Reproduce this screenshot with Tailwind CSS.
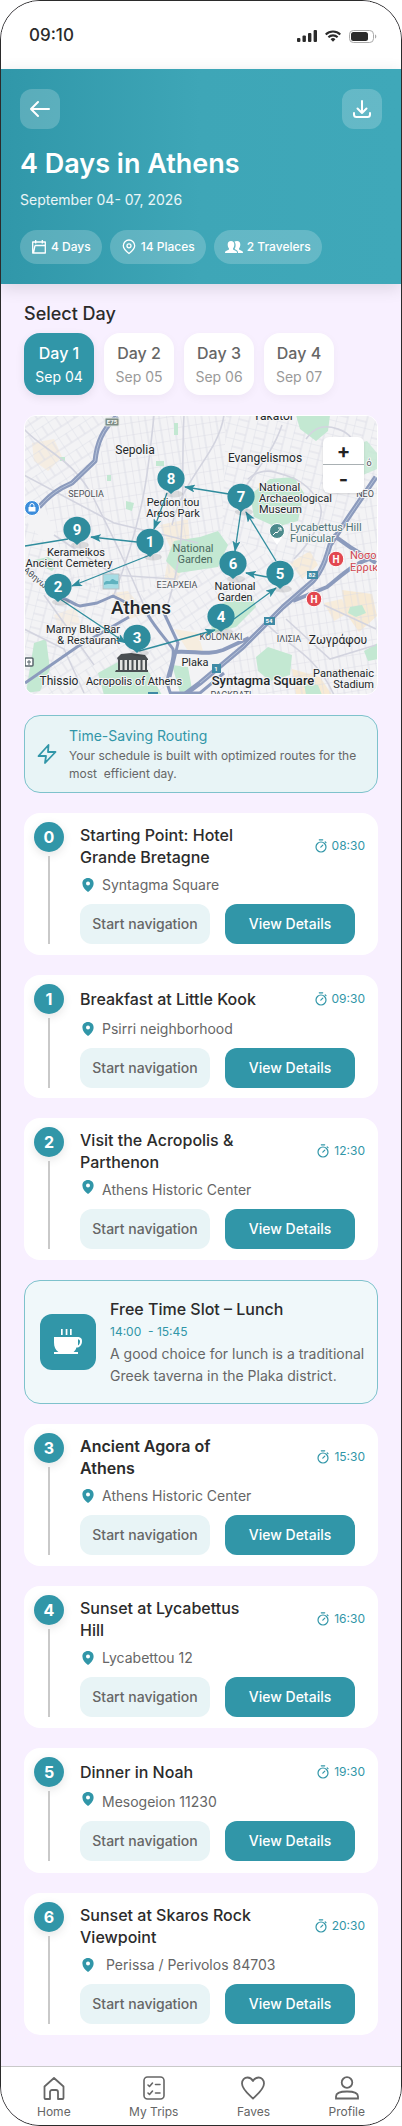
<!DOCTYPE html>
<html lang="en">
  <head>
    <meta charset="UTF-8" />
    <meta name="viewport" content="width=device-width, initial-scale=1.0" />
    <title>4 Days in Athens</title>
    <script src="https://cdn.jsdelivr.net/npm/@tailwindcss/browser@4"></script>
  </head>
  <body class="bg-white font-['Inter',sans-serif] text-[#2b2b2b]">
    <!-- Shared icons -->
    <svg class="hidden">
      <symbol id="pin" viewBox="0 0 12 14">
        <path fill="currentColor" fill-rule="evenodd" d="M6 0C2.700 0 .4 2.400.4 5.400.4 8.600 3 11.800 6 14c3-2.200 5.600-5.400 5.600-8.600C11.600 2.400 9.300 0 6 0Zm0 3.400a2 2 0 1 1 0 4 2 2 0 0 1 0-4Z" />
      </symbol>
      <symbol id="timer" viewBox="0 0 12 14">
        <g fill="none" stroke="currentColor" stroke-width="1.200" stroke-linecap="round">
          <circle cx="6" cy="8" r="5" />
          <path d="M4.300.8h3.400M5.800 8.200l2-2M10.200 2.900l.8.8" />
        </g>
      </symbol>
    </svg>

    <div class="w-full overflow-hidden rounded-[40px] border border-[#2b2b2b] bg-[#f8f0ff]">
      <!-- Status bar -->
      <div class="flex h-[68px] items-center justify-between bg-white pt-[2px] pr-6 pl-7">
        <span class="text-[17px] font-medium">09:10</span>
        <div class="flex items-center gap-2">
          <svg class="h-3 w-5" viewBox="0 0 20 12" fill="#2b2b2b">
            <rect x="0" y="8" width="3.400" height="4" rx="1" />
            <rect x="5.500" y="5.500" width="3.400" height="6.500" rx="1" />
            <rect x="11" y="3" width="3.400" height="9" rx="1" />
            <rect x="16.600" y="0" width="3.400" height="12" rx="1" />
          </svg>
          <svg class="h-3 w-4" viewBox="0 0 17 12" fill="none" stroke="#2b2b2b" stroke-width="2.200">
            <path d="M.8 4.400a11 11 0 0 1 15.400 0M3.600 7.300a7 7 0 0 1 9.800 0" />
            <path d="M8.500 12 5.900 9.400a3.700 3.700 0 0 1 5.200 0Z" fill="#2b2b2b" stroke="none" />
          </svg>
          <svg class="h-[13px] w-7" viewBox="0 0 28 13">
            <rect x=".5" y=".5" width="24" height="12" rx="3.800" fill="none" stroke="#a9a9a9" />
            <rect x="2" y="2" width="17" height="9" rx="2.500" fill="#2b2b2b" />
            <path d="M26 4.500v4c.8-.3 1.300-1.100 1.300-2s-.5-1.700-1.300-2Z" fill="#a9a9a9" />
          </svg>
        </div>
      </div>

      <!-- Header -->
      <header class="bg-linear-to-r from-[#3097a9] via-[#3ea6b7] via-50% to-[#3fa8b9] px-[19px] py-5 text-white shadow-[0_4px_16px_rgba(0,0,0,0.12)]">
        <div class="flex justify-between">
          <button aria-label="Back" class="flex size-10 items-center justify-center rounded-xl bg-white/20">
            <svg class="size-5" viewBox="0 0 20 20" fill="none" stroke="currentColor" stroke-width="2" stroke-linecap="round" stroke-linejoin="round">
              <path d="M19 10H1M8 3l-7 7 7 7" />
            </svg>
          </button>
          <button aria-label="Download" class="flex size-10 items-center justify-center rounded-xl bg-white/20">
            <svg class="size-5" viewBox="0 0 20 20" fill="none" stroke="currentColor" stroke-width="2" stroke-linecap="round" stroke-linejoin="round">
              <path d="M10 2v12M5.500 9.500 10 14l4.500-4.500M2 14v1.500A2.500 2.500 0 0 0 4.500 18h11a2.500 2.500 0 0 0 2.500-2.500V14" />
            </svg>
          </button>
        </div>
        <h1 class="mt-[17px] text-[27px] leading-9 font-semibold">4 Days in Athens</h1>
        <p class="mt-2 text-sm text-white/90">September 04- 07, 2026</p>
        <ul class="mt-5 flex gap-2 text-xs leading-[34px] font-medium">
          <li class="flex items-center gap-1 rounded-full bg-white/20 px-[11px]">
            <svg class="size-4" viewBox="0 0 16 16" fill="none" stroke="currentColor" stroke-width="1.300" stroke-linejoin="round">
              <path d="M1.700 3h12.600v11H1.700ZM4.700 1v3.500M11.300 1v3.500M4 6.500h10.300M4 6.500 2.500 14" />
            </svg>
            4 Days
          </li>
          <li class="flex items-center gap-1 rounded-full bg-white/20 px-[11px]">
            <svg class="size-4" viewBox="0 0 16 16" fill="none" stroke="currentColor" stroke-width="1.300">
              <path d="M8 14.500C4.800 12 2.300 9.600 2.300 6.700a5.700 5.700 0 0 1 11.400 0c0 2.900-2.500 5.300-5.700 7.800Z" />
              <circle cx="8" cy="6.800" r="2" />
            </svg>
            14 Places
          </li>
          <li class="flex items-center gap-1 rounded-full bg-white/20 px-[11px]">
            <svg class="h-4 w-[18px]" viewBox="0 0 18 16" fill="currentColor">
              <path d="M6 2c2.200 0 3.300 1.500 3.300 3.500 0 1.700-.5 3-1.300 3.900v1.200l3 1.400c.7.400 1 1 1 2H0c0-1 .3-1.600 1-2l3-1.400V9.400C3.200 8.500 2.700 7.200 2.700 5.500 2.700 3.500 3.800 2 6 2Z" />
              <path d="M12 2c2.200 0 3.300 1.500 3.300 3.500 0 1.700-.5 3-1.300 3.900v1.200l3 1.400c.7.400 1 1 1 2h-5c0-1.600-.6-2.400-1.600-3L9.600 10c1.600-2.500 1.300-6-.3-7.200.7-.5 1.600-.8 2.700-.8Z" />
            </svg>
            2 Travelers
          </li>
        </ul>
      </header>

      <main class="flex flex-col gap-5 px-[23px] pt-[18px] pb-[31px]">
        <!-- Day picker -->
        <section>
          <h2 class="text-lg leading-6 font-medium">Select Day</h2>
          <div class="mt-[7px] flex gap-[10px] text-center">
            <button class="h-[62px] w-[70px] rounded-2xl bg-[#3196a8] pt-[2px] text-white shadow-[0_3px_10px_rgba(0,0,0,0.08)]">
              <span class="block text-base leading-6 font-medium">Day 1</span>
              <span class="block text-sm leading-6">Sep 04</span>
            </button>
            <button class="h-[62px] w-[70px] rounded-2xl bg-white pt-[2px] shadow-[0_3px_10px_rgba(0,0,0,0.04)]">
              <span class="block text-base leading-6 font-medium text-[#666]">Day 2</span>
              <span class="block text-sm leading-6 text-[#999]">Sep 05</span>
            </button>
            <button class="h-[62px] w-[70px] rounded-2xl bg-white pt-[2px] shadow-[0_3px_10px_rgba(0,0,0,0.04)]">
              <span class="block text-base leading-6 font-medium text-[#666]">Day 3</span>
              <span class="block text-sm leading-6 text-[#999]">Sep 06</span>
            </button>
            <button class="h-[62px] w-[70px] rounded-2xl bg-white pt-[2px] shadow-[0_3px_10px_rgba(0,0,0,0.04)]">
              <span class="block text-base leading-6 font-medium text-[#666]">Day 4</span>
              <span class="block text-sm leading-6 text-[#999]">Sep 07</span>
            </button>
          </div>
        </section>

        <!-- Map -->
        <section class="relative overflow-hidden rounded-xl border border-white">
          <svg class="block w-full font-['Roboto',sans-serif]" viewBox="1 1 352 278">
            <defs>
              <pattern id="streetsA" width="19" height="14" patternUnits="userSpaceOnUse" patternTransform="rotate(14)">
                <path d="M0 0h19M0 8h11M0 0v14M11 0v14" fill="none" stroke="#dddee7" stroke-width=".9" />
              </pattern>
              <pattern id="streetsB" width="16" height="19" patternUnits="userSpaceOnUse" patternTransform="rotate(-33)">
                <path d="M0 0h16M0 11h16M0 0v19M9 0v11" fill="none" stroke="#dddee7" stroke-width=".9" />
              </pattern>
              <pattern id="streetsC" width="14" height="12" patternUnits="userSpaceOnUse" patternTransform="rotate(-9)">
                <path d="M0 0h14M0 0v12M7 0v12" fill="none" stroke="#dbdce5" stroke-width=".9" />
              </pattern>
              <marker id="arrow" viewBox="0 0 11 8" refX="10" refY="4" markerWidth="11" markerHeight="8" markerUnits="userSpaceOnUse" orient="auto">
                <path d="M0 0 11 4 0 8 2.500 4Z" fill="#2f8c9d" />
              </marker>
              <g id="marker">
                <ellipse cx="3" cy="15" rx="9" ry="3.500" fill="#000" opacity=".1" />
                <ellipse cx="0" cy="-.5" rx="13.600" ry="12.800" fill="#2f8c9d" />
                <path d="M-5 10.500 0 15l5-4.500Z" fill="#2f8c9d" />
              </g>
            </defs>

            <rect width="354" height="280" fill="#f3f3f5" />
            <!-- Built-up patches -->
            <g fill="#f7ead5">
              <path d="M8 28 30 24l8 18-14 14L10 46Z" opacity=".6" />
              <path d="m136 110 28-6 2 26-14 40-12-4 6-34Z" opacity=".7" />
              <path d="m266 148 20-12 8 14-16 14Z" opacity=".8" />
              <path d="m318 175 30 4 5 22-18 16-14-20Z" />
              <path d="m268 254 28 8 12 18h-36Z" />
              <path d="m88 178 16-2 18 22-16 6Z" opacity=".7" />
              <path d="m30 200 22-8 4 16-20 8Z" opacity=".5" />
              <path d="m300 188 18-4 6 14-14 8Z" opacity=".8" />
              <path d="m150 214 24 4 6 22-16-4Z" opacity=".7" />
            </g>
            <!-- Street grid -->
            <path d="M0 0h92L70 50 0 104Z" fill="url(#streetsB)" />
            <path d="M92 0h110l-4 120-90 66-60-20L20 90l52-40Z" fill="url(#streetsC)" />
            <path d="M202 0h152v70l-60 90-96-40Z" fill="url(#streetsA)" />
            <path d="M0 104 50 160l60 30-10 20L0 270Z" fill="url(#streetsA)" />
            <path d="m198 120 94 40-60 60-120-10-4-24Z" fill="url(#streetsB)" />
            <path d="m354 70-60 90-90 80v40h150Z" fill="url(#streetsC)" />
            <path d="m0 270 100-66 50 30-10 46H0Z" fill="url(#streetsB)" />
            <!-- Parks -->
            <g fill="#c3e8d2">
              <path d="M272 0h34l-2 16-12 10-16-12Z" />
              <path d="m329 30 14-4 10 12v16l-14 6Z" opacity=".8" />
              <path d="m226 80 20-16 24-2 10 16-6 28-22 6-22-10Z" />
              <path d="m142 146 8-20 26-4 18-6 10 14-10 22-40 6Z" />
              <path d="m186 196 20-12 22-4 4 12-20 20-24 6Z" />
              <path d="m74 258 22-12 26 6 16 28H80Z" />
              <path d="m10 228 12-4 4 30-10 22-14 2Z" />
              <path d="m232 242 12-10 24 8-2 20-20 6-12-10Z" />
              <path d="m326 192 12-2 4 8-10 4-8-4Z" />
              <path d="m6 146 18-4 12 6-8 8Z" />
              <path d="m148 250 16 2 4 22-12 4Z" />
              <path d="M132 46h8v5h-8ZM150 8h4v12h-4ZM36 42h5v4h-5ZM83 60h4v6h-4ZM102 86l8 2-2 8-6-2Z" />
              <path d="m340 236 14-8v16l-10 2Z" />
              <path d="m280 268 14 2 4 10h-16Z" />
            </g>
            <!-- Secondary roads -->
            <g fill="none" stroke="#d3d4df" stroke-width="1.600">
              <path d="M0 14c20 22 50 30 70 70s30 60 54 116" />
              <path d="M130 0c-6 60-10 100-40 180M160 0c-4 80 6 130-20 200" />
              <path d="M200 0c-6 40-40 60-52 110M258 10c-10 30-30 50-42 70" />
              <path d="M0 60 90 108l84 20M30 120l60 40 60 4" />
              <path d="M224 64c16-14 30-6 42-2s24 14 30 28-12 40-26 54" />
              <path d="M282 24c10-14 20-14 32-10s18 12 14 24" />
              <path d="m300 190 52 24M262 204l44 40 46-14M240 206c20 24 50 30 70 74" />
              <path d="M20 180 70 250M0 214l40 20 20 44" />
            </g>
            <!-- Motorways -->
            <g fill="none" stroke="#8c9bbd" stroke-width="5" stroke-linejoin="round">
              <path d="M93 1C78 15 73 28 71 46L48 68c-14 6-22 12-33 24" />
              <path d="M352 62 326 100l-20 30c-4 14-8 26-17 36l-30 26-40 40-43 36-16 12" />
              <path d="M352 142c-20 4-34 18-49 30l-34 14M309 120l17 12 26 16" stroke-width="4" />
              <path d="M124 200c8 14 18 24 25 34 2 12-6 24-6 34l4 12M140 198l14 30-8 34" stroke-width="3" />
              <path d="M149 237c20-2 34 4 50-2l26-12" stroke-width="4" />
              <path d="M36 182c12 4 14 8 20 9l17-3 16-7 12 6" stroke-width="3" />
              <path d="M1 268 53 232l52-30" stroke-width="3" />
              <path d="m146 278 30 0 24-20" stroke-width="3" />
            </g>
            <g fill="none" stroke="#b3c0d8" stroke-width="1">
              <path d="M93 1C78 15 73 28 71 46L48 68c-14 6-22 12-33 24" />
              <path d="M352 62 326 100l-20 30c-4 14-8 26-17 36l-30 26-40 40-43 36" />
            </g>

            <!-- Road signs and small symbols -->
            <g font-size="6" font-weight="700" text-anchor="middle" fill="#fff">
              <rect x="81" y="3" width="14" height="8" rx="1" fill="#7c8c85" stroke="#dfe5e2" />
              <text x="88" y="9">E75</text>
              <rect x="283" y="156" width="11" height="8" fill="#3f8aa5" />
              <text x="288" y="162">82</text>
              <rect x="240" y="202" width="11" height="8" fill="#3f8aa5" />
              <text x="245" y="208">54</text>
              <rect x="188" y="249" width="9" height="9" fill="#3f8aa5" />
              <text x="192" y="256">1</text>
            </g>
            <rect x="124" y="277" width="10" height="4" fill="#3f8aa5" />
            <circle cx="8" cy="93" r="7.500" fill="#3c8ddb" stroke="#fff" />
            <path d="M4.500 92h7v4.500h-7Z" fill="#fff" />
            <path d="M6 92v-1.500a2 2 0 0 1 4 0V92" fill="none" stroke="#fff" />
            <rect x="1" y="243" width="8" height="8" rx="1" fill="#fff" stroke="#59656c" stroke-width="1.500" />
            <path d="M3 247h4M5 245v5" stroke="#59656c" />
            <rect x="79" y="159" width="16" height="15" fill="#a6dce4" stroke="#b8bfc3" />
            <path d="M80 168c3-4 5 0 7-3s4 2 7 1v3c-5 1-9-1-14 1Z" fill="#5fb2bf" />
            <path d="m247 121 6 9 6-9Z" fill="#fff" />
            <circle cx="253" cy="116" r="7.500" fill="#4c8a8c" stroke="#fff" />
            <path d="m249 120 3-3 1 1 4-5m-3 0h3v3" fill="none" stroke="#fff" />
            <g fill="#e2474f" stroke="#fff">
              <circle cx="312" cy="144" r="7.800" />
              <circle cx="290" cy="184" r="7.800" />
            </g>
            <g fill="#fff" font-size="10" font-weight="700" text-anchor="middle">
              <text x="312" y="148">H</text>
              <text x="290" y="188">H</text>
            </g>
            <!-- Parthenon -->
            <path d="M94 245h28v10H94Z" fill="#e4e4e2" />
            <g fill="#4a4f52">
              <path d="m93 243 4-4 10-1 14 2 3 4v1H94Z" />
              <path d="M94 245h2v10h-2ZM98.500 245h2v10h-2ZM103 245h2v10h-2ZM107.500 245h2v10h-2ZM112 245h2v10h-2ZM116.500 245h2v10h-2ZM121 245h2v10h-2Z" />
              <path d="M92 255h32v2H91Z" />
            </g>

            <!-- Place names -->
            <g font-size="11" fill="#23272a" stroke="#f5f5f6" stroke-width="2" stroke-linejoin="round" paint-order="stroke" text-anchor="middle">
              <text x="111" y="39" font-size="12">Sepolia</text>
              <text x="249" y="5" font-size="12">Yakatol</text>
              <text x="241" y="47" font-size="12">Evangelismos</text>
              <text x="149" y="91">Pedion tou</text>
              <text x="149" y="102">Areos Park</text>
              <text x="52" y="141">Kerameikos</text>
              <text x="45" y="152">Ancient Cemetery</text>
              <text x="117" y="199" font-size="19" font-weight="500">Athens</text>
              <text x="35" y="270" font-size="12">Thissio</text>
              <text x="110" y="270">Acropolis of Athens</text>
              <text x="171" y="251">Plaka</text>
              <text x="211" y="175">National</text>
              <text x="211" y="186">Garden</text>
              <text x="314" y="229" font-size="12">Ζωγράφου</text>
              <text x="239" y="270" font-size="13" font-weight="500">Syntagma Square</text>
              <g text-anchor="end">
                <text x="96" y="218">Marny Blue Bar</text>
                <text x="96" y="229">&amp; Restaurant</text>
                <text x="350" y="262">Panathenaic</text>
                <text x="350" y="273">Stadium</text>
              </g>
              <g text-anchor="start">
                <text x="235" y="76">National</text>
                <text x="235" y="87">Archaeological</text>
                <text x="235" y="98">Museum</text>
              </g>
              <g fill="#4f7376" text-anchor="start">
                <text x="266" y="116">Lycabettus Hill</text>
                <text x="266" y="127">Funicular</text>
              </g>
              <g fill="#4c6a60" stroke="none">
                <text x="169" y="137">National</text>
                <text x="171" y="148">Garden</text>
              </g>
              <g fill="#cf4650" text-anchor="start">
                <text x="326" y="144">Νοσο</text>
                <text x="326" y="156">Ερρικ</text>
              </g>
              <g font-size="9" fill="#4a5056">
                <text x="62" y="82">SEPOLIA</text>
                <text x="153" y="173">ΕΞΑΡΧΕΙΑ</text>
                <text x="197" y="225">KOLONAKI</text>
                <text x="265" y="227">ΙΛΙΣΙΑ</text>
                <text x="341" y="82">ΝΕΟ</text>
                <text x="345" y="51">ό</text>
                <text x="207" y="283">PACKRATI</text>
                <text x="13" y="167" transform="rotate(40 13 164)">Αθηνών</text>
              </g>
            </g>

            <!-- Route -->
            <path d="M44 124 1 131" fill="none" stroke="#2f8c9d" stroke-width="1.300" />
            <g fill="none" stroke="#2f8c9d" stroke-width="1.300">
              <path d="M205 79 161 72" marker-end="url(#arrow)" />
              <path d="M143 78 130 114" marker-end="url(#arrow)" />
              <path d="M113 127 67 122" marker-end="url(#arrow)" />
              <path d="M126 140 48 171" marker-end="url(#arrow)" />
              <path d="M36 184 102 228" marker-end="url(#arrow)" />
              <path d="M115 236 191 215" marker-end="url(#arrow)" />
              <path d="M210 204 252 173" marker-end="url(#arrow)" />
              <path d="M243 162 222 158" marker-end="url(#arrow)" />
              <path d="M252 146 222 97" marker-end="url(#arrow)" />
              <path d="M217 95 211 136" marker-end="url(#arrow)" />
            </g>
            <use href="#marker" x="147" y="64" />
            <use href="#marker" x="53" y="115" />
            <use href="#marker" x="126" y="127" />
            <use href="#marker" x="34" y="172" />
            <use href="#marker" x="113" y="223" />
            <use href="#marker" x="217" y="82" />
            <use href="#marker" x="209" y="149" />
            <use href="#marker" x="256" y="159" />
            <use href="#marker" x="197" y="202" />
            <g font-size="15" font-weight="700" fill="#fff" text-anchor="middle">
              <text x="147" y="69">8</text>
              <text x="53" y="120">9</text>
              <text x="126" y="132">1</text>
              <text x="34" y="177">2</text>
              <text x="113" y="228">3</text>
              <text x="217" y="87">7</text>
              <text x="209" y="154">6</text>
              <text x="256" y="164">5</text>
              <text x="197" y="207">4</text>
            </g>
          </svg>
          <div class="absolute top-[21px] right-[13px] flex w-[41px] flex-col rounded-md bg-white text-center text-xl font-bold text-[#222] shadow">
            <button aria-label="Zoom in" class="h-7 border-b border-[#a9b0b3] leading-7">+</button>
            <button aria-label="Zoom out" class="h-7 leading-6">-</button>
          </div>
        </section>

        <!-- Routing note -->
        <section class="flex items-center gap-3 rounded-2xl border border-[#7ec2cc] bg-[#e8f4f6] py-[9px] pr-4 pl-3">
          <svg class="size-5 shrink-0 text-[#3196a8]" viewBox="0 0 20 20" fill="none" stroke="currentColor" stroke-width="1.800" stroke-linejoin="round">
            <path d="M11.500 1 1.500 12H9l-1 7L18.500 8H11Z" />
          </svg>
          <div>
            <h3 class="text-sm leading-[22px] text-[#3196a8]">Time-Saving Routing</h3>
            <p class="text-xs leading-[18px] text-[#666]">Your schedule is built with optimized routes for the<br />most &nbsp;efficient day.</p>
          </div>
        </section>

        <!-- Stops -->
        <article class="flex gap-4 rounded-2xl bg-white pt-[9px] pr-[13px] pb-[11px] pl-[10px]">
          <div class="flex flex-col items-center gap-1">
            <span class="flex size-[30px] items-center justify-center rounded-full bg-[#3196a8] text-base font-bold text-white shadow-[0_3px_10px_rgba(0,0,0,0.1)]">0</span>
            <span class="w-[2px] grow bg-[#c9c9c9]"></span>
          </div>
          <div class="grow pt-[2px]">
            <div class="flex min-h-[25px] items-center justify-between">
              <h3 class="text-base leading-[22px] font-medium">Starting Point: Hotel<br />Grande Bretagne</h3>
              <span class="flex items-center gap-[5px] text-xs text-[#3196a8]"><svg class="h-[14px] w-3"><use href="#timer" /></svg>08:30</span>
            </div>
            <p class="mt-[7px] flex items-center gap-2 pl-[2px] text-sm text-[#666]"><svg class="h-[14px] w-3 text-[#3196a8]"><use href="#pin" /></svg>Syntagma Square</p>
            <div class="mt-[9px] mr-[10px] grid grid-cols-2 gap-[15px] text-sm font-medium">
              <button class="h-10 rounded-xl bg-[#e8f4f6] text-[#666]">Start navigation</button>
              <button class="h-10 rounded-xl bg-[#3196a8] text-white">View Details</button>
            </div>
          </div>
        </article>

        <article class="flex gap-4 rounded-2xl bg-white pt-[9px] pr-[13px] pb-[10px] pl-[10px]">
          <div class="flex flex-col items-center gap-1">
            <span class="flex size-[30px] items-center justify-center rounded-full bg-[#3196a8] text-base font-bold text-white shadow-[0_3px_10px_rgba(0,0,0,0.1)]">1</span>
            <span class="w-[2px] grow bg-[#c9c9c9]"></span>
          </div>
          <div class="grow pt-[2px]">
            <div class="flex min-h-[26px] items-center justify-between">
              <h3 class="text-base leading-[22px] font-medium">Breakfast at Little Kook</h3>
              <span class="flex items-center gap-[5px] text-xs text-[#3196a8]"><svg class="h-[14px] w-3"><use href="#timer" /></svg>09:30</span>
            </div>
            <p class="mt-[7px] flex items-center gap-2 pl-[2px] text-sm text-[#666]"><svg class="h-[14px] w-3 text-[#3196a8]"><use href="#pin" /></svg>Psirri neighborhood</p>
            <div class="mt-[9px] mr-[10px] grid grid-cols-2 gap-[15px] text-sm font-medium">
              <button class="h-10 rounded-xl bg-[#e8f4f6] text-[#666]">Start navigation</button>
              <button class="h-10 rounded-xl bg-[#3196a8] text-white">View Details</button>
            </div>
          </div>
        </article>

        <article class="flex gap-4 rounded-2xl bg-white pt-[9px] pr-[13px] pb-[11px] pl-[10px]">
          <div class="flex flex-col items-center gap-1">
            <span class="flex size-[30px] items-center justify-center rounded-full bg-[#3196a8] text-base font-bold text-white shadow-[0_3px_10px_rgba(0,0,0,0.1)]">2</span>
            <span class="w-[2px] grow bg-[#c9c9c9]"></span>
          </div>
          <div class="grow pt-[2px]">
            <div class="flex min-h-[25px] items-center justify-between">
              <h3 class="text-base leading-[22px] font-medium">Visit the Acropolis &amp;<br />Parthenon</h3>
              <span class="flex items-center gap-[5px] text-xs text-[#3196a8]"><svg class="h-[14px] w-3"><use href="#timer" /></svg>12:30</span>
            </div>
            <p class="mt-[7px] flex items-start gap-2 pl-[2px] text-sm text-[#666]"><svg class="h-[14px] w-3 text-[#3196a8]"><use href="#pin" /></svg>Athens Historic Center</p>
            <div class="mt-[9px] mr-[10px] grid grid-cols-2 gap-[15px] text-sm font-medium">
              <button class="h-10 rounded-xl bg-[#e8f4f6] text-[#666]">Start navigation</button>
              <button class="h-10 rounded-xl bg-[#3196a8] text-white">View Details</button>
            </div>
          </div>
        </article>

        <!-- Free slot -->
        <article class="flex items-center gap-[14px] rounded-2xl border border-[#7ec2cc] bg-[#f0f8fa] py-4 pr-3 pl-[15px]">
          <div class="flex size-14 shrink-0 items-center justify-center rounded-xl bg-[#3196a8]">
            <svg class="size-7" viewBox="0 0 28 28" fill="#fff">
              <path d="M7 1h1.700v6H7ZM11.700 1h1.700v6h-1.700ZM16 1h1.700v6H16Z" />
              <path fill-rule="evenodd" d="M0 9h24.500a4 4 0 0 1 3.500 4c0 4-2.300 6.600-5.600 6.600-.5 2-1.400 3.400-2.800 4.400H24v2H0v-2h4.400C1.400 22 0 18.500 0 14.500Zm24 2.200v6.300c1.400-.8 2-2.300 2-4.200 0-1.100-.8-2.100-2-2.100Z" />
            </svg>
          </div>
          <div>
            <h3 class="text-base leading-6 font-medium">Free Time Slot – Lunch</h3>
            <p class="text-xs leading-[22px] text-[#3196a8]">14:00 &nbsp;- 15:45</p>
            <p class="text-sm leading-[22px] text-[#666]">A good choice for lunch is a traditional Greek taverna in the Plaka district.</p>
          </div>
        </article>

        <article class="flex gap-4 rounded-2xl bg-white pt-[9px] pr-[13px] pb-[11px] pl-[10px]">
          <div class="flex flex-col items-center gap-1">
            <span class="flex size-[30px] items-center justify-center rounded-full bg-[#3196a8] text-base font-bold text-white shadow-[0_3px_10px_rgba(0,0,0,0.1)]">3</span>
            <span class="w-[2px] grow bg-[#c9c9c9]"></span>
          </div>
          <div class="grow pt-[2px]">
            <div class="flex min-h-[25px] items-center justify-between">
              <h3 class="text-base leading-[22px] font-semibold">Ancient Agora of<br />Athens</h3>
              <span class="flex items-center gap-[5px] text-xs text-[#3196a8]"><svg class="h-[14px] w-3"><use href="#timer" /></svg>15:30</span>
            </div>
            <p class="mt-[7px] flex items-center gap-2 pl-[2px] text-sm text-[#666]"><svg class="h-[14px] w-3 text-[#3196a8]"><use href="#pin" /></svg>Athens Historic Center</p>
            <div class="mt-[9px] mr-[10px] grid grid-cols-2 gap-[15px] text-sm font-medium">
              <button class="h-10 rounded-xl bg-[#e8f4f6] text-[#666]">Start navigation</button>
              <button class="h-10 rounded-xl bg-[#3196a8] text-white">View Details</button>
            </div>
          </div>
        </article>

        <article class="flex gap-4 rounded-2xl bg-white pt-[9px] pr-[13px] pb-[11px] pl-[10px]">
          <div class="flex flex-col items-center gap-1">
            <span class="flex size-[30px] items-center justify-center rounded-full bg-[#3196a8] text-base font-bold text-white shadow-[0_3px_10px_rgba(0,0,0,0.1)]">4</span>
            <span class="w-[2px] grow bg-[#c9c9c9]"></span>
          </div>
          <div class="grow pt-[2px]">
            <div class="flex min-h-[25px] items-center justify-between">
              <h3 class="text-base leading-[22px] font-medium">Sunset at Lycabettus<br />Hill</h3>
              <span class="flex items-center gap-[5px] text-xs text-[#3196a8]"><svg class="h-[14px] w-3"><use href="#timer" /></svg>16:30</span>
            </div>
            <p class="mt-[7px] flex items-center gap-2 pl-[2px] text-sm text-[#666]"><svg class="h-[14px] w-3 text-[#3196a8]"><use href="#pin" /></svg>Lycabettou 12</p>
            <div class="mt-[9px] mr-[10px] grid grid-cols-2 gap-[15px] text-sm font-medium">
              <button class="h-10 rounded-xl bg-[#e8f4f6] text-[#666]">Start navigation</button>
              <button class="h-10 rounded-xl bg-[#3196a8] text-white">View Details</button>
            </div>
          </div>
        </article>

        <article class="flex gap-4 rounded-2xl bg-white pt-[9px] pr-[13px] pb-3 pl-[10px]">
          <div class="flex flex-col items-center gap-1">
            <span class="flex size-[30px] items-center justify-center rounded-full bg-[#3196a8] text-base font-bold text-white shadow-[0_3px_10px_rgba(0,0,0,0.1)]">5</span>
            <span class="w-[2px] grow bg-[#c9c9c9]"></span>
          </div>
          <div class="grow pt-[2px]">
            <div class="flex min-h-[26px] items-center justify-between">
              <h3 class="text-base leading-[22px] font-medium">Dinner in Noah</h3>
              <span class="flex items-center gap-[5px] text-xs text-[#3196a8]"><svg class="h-[14px] w-3"><use href="#timer" /></svg>19:30</span>
            </div>
            <p class="mt-[7px] flex items-start gap-2 pl-[2px] text-sm text-[#666]"><svg class="h-[14px] w-3 text-[#3196a8]"><use href="#pin" /></svg>Mesogeion 11230</p>
            <div class="mt-[9px] mr-[10px] grid grid-cols-2 gap-[15px] text-sm font-medium">
              <button class="h-10 rounded-xl bg-[#e8f4f6] text-[#666]">Start navigation</button>
              <button class="h-10 rounded-xl bg-[#3196a8] text-white">View Details</button>
            </div>
          </div>
        </article>

        <article class="flex gap-4 rounded-2xl bg-white pt-[9px] pr-[13px] pb-[11px] pl-[10px]">
          <div class="flex flex-col items-center gap-1">
            <span class="flex size-[30px] items-center justify-center rounded-full bg-[#3196a8] text-base font-bold text-white shadow-[0_3px_10px_rgba(0,0,0,0.1)]">6</span>
            <span class="w-[2px] grow bg-[#c9c9c9]"></span>
          </div>
          <div class="grow pt-[2px]">
            <div class="flex min-h-[25px] items-center justify-between">
              <h3 class="text-base leading-[22px] font-medium">Sunset at Skaros Rock<br />Viewpoint</h3>
              <span class="flex items-center gap-[5px] text-xs text-[#3196a8]"><svg class="h-[14px] w-3"><use href="#timer" /></svg>20:30</span>
            </div>
            <p class="mt-[7px] flex items-center gap-3 pl-[2px] text-sm text-[#666]"><svg class="h-[14px] w-3 text-[#3196a8]"><use href="#pin" /></svg>Perissa / Perivolos 84703</p>
            <div class="mt-[9px] mr-[10px] grid grid-cols-2 gap-[15px] text-sm font-medium">
              <button class="h-10 rounded-xl bg-[#e8f4f6] text-[#666]">Start navigation</button>
              <button class="h-10 rounded-xl bg-[#3196a8] text-white">View Details</button>
            </div>
          </div>
        </article>
      </main>

      <!-- Bottom navigation -->
      <nav class="flex justify-between border-t border-[#c9c9c9] bg-white px-9 pt-[9px] pb-[3px] text-xs leading-5 text-[#666]">
        <a href="#" class="flex flex-col items-center gap-[2px]">
          <svg class="size-6" viewBox="0 0 24 24" fill="none" stroke="currentColor" stroke-width="1.800" stroke-linejoin="round">
            <path d="M2.500 10.500 12 2l9.500 8.500V22a1 1 0 0 1-1 1H16v-7a2 2 0 0 0-2-2h-4a2 2 0 0 0-2 2v7H3.500a1 1 0 0 1-1-1Z" />
          </svg>
          Home
        </a>
        <a href="#" class="flex flex-col items-center gap-[2px]">
          <svg class="size-6" viewBox="0 0 24 24" fill="none" stroke="currentColor" stroke-width="1.600" stroke-linecap="round" stroke-linejoin="round">
            <rect x="2" y="1" width="20" height="22" rx="3.500" />
            <path d="m6 9 1.500 1.500L10.500 7M13.500 8.500h4.500M6 17l1.500 1.500 3-3.500M13.500 17h4.500" />
          </svg>
          My Trips
        </a>
        <a href="#" class="flex flex-col items-center gap-[2px]">
          <svg class="size-6" viewBox="0 0 24 24" fill="none" stroke="currentColor" stroke-width="1.800" stroke-linejoin="round">
            <path d="M12 22.500C8 18.500 1 13.500 1 7.500 1 4 3.500 1.500 6.500 1.500c2.300 0 4.300 1.400 5.500 3.500 1.200-2.100 3.200-3.500 5.500-3.500 3 0 5.500 2.500 5.500 6 0 6-7 11-11 15Z" />
          </svg>
          Faves
        </a>
        <a href="#" class="flex flex-col items-center gap-[2px]">
          <svg class="size-6" viewBox="0 0 24 24" fill="none" stroke="currentColor" stroke-width="1.800">
            <circle cx="12" cy="6.500" r="5.300" />
            <path d="M1 22.500v-2C1 17 6 15.500 12 15.500S23 17 23 20.500v2Z" />
          </svg>
          Profile
        </a>
      </nav>
    </div>
  </body>
</html>
